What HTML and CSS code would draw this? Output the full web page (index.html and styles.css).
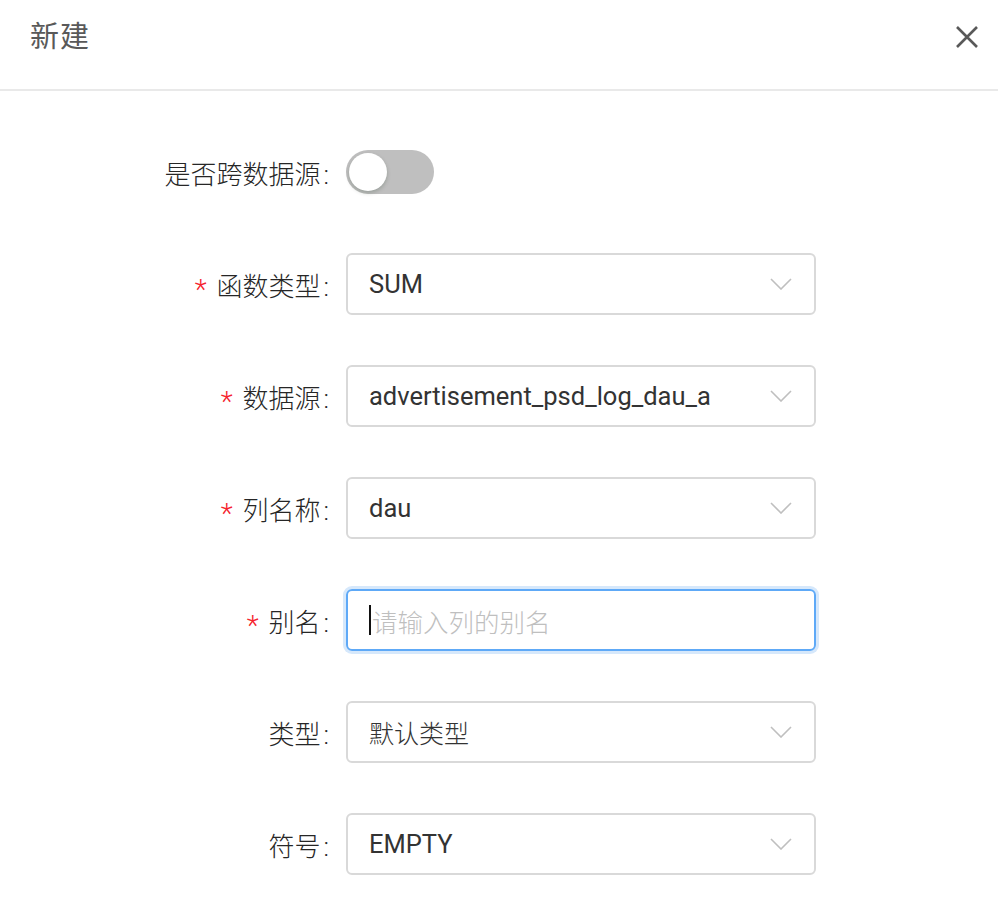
FILE: index.html
```html
<!DOCTYPE html>
<html lang="zh-CN">
<head>
<meta charset="utf-8">
<title>新建</title>
<link rel="stylesheet" href="styles.css">
</head>
<body>
<div class="modal">
  <div class="modal-header">
    <div class="modal-title">新建</div>
    <button class="modal-close" aria-label="关闭">
      <svg width="22" height="22" viewBox="0 0 22 22"><path d="M1 1 L21 21 M21 1 L1 21" stroke="#595959" stroke-width="2.6" stroke-linecap="butt" fill="none"/></svg>
    </button>
  </div>
  <div class="modal-body">
    <div class="form-row">
      <label class="form-label">是否跨数据源<span class="colon">:</span></label>
      <div class="form-control switch-wrap">
        <span class="switch"><span class="switch-knob"></span></span>
      </div>
    </div>
    <div class="form-row">
      <label class="form-label"><span class="req">*</span>函数类型<span class="colon">:</span></label>
      <div class="form-control">
        <div class="select"><span class="select-value">SUM</span><svg class="arrow" width="22" height="12" viewBox="0 0 22 12"><path d="M1 1 L11 11 L21 1" stroke="#bfbfbf" stroke-width="1.6" fill="none"/></svg></div>
      </div>
    </div>
    <div class="form-row">
      <label class="form-label"><span class="req">*</span>数据源<span class="colon">:</span></label>
      <div class="form-control">
        <div class="select"><span class="select-value">advertisement_psd_log_dau_a</span><svg class="arrow" width="22" height="12" viewBox="0 0 22 12"><path d="M1 1 L11 11 L21 1" stroke="#bfbfbf" stroke-width="1.6" fill="none"/></svg></div>
      </div>
    </div>
    <div class="form-row">
      <label class="form-label"><span class="req">*</span>列名称<span class="colon">:</span></label>
      <div class="form-control">
        <div class="select"><span class="select-value">dau</span><svg class="arrow" width="22" height="12" viewBox="0 0 22 12"><path d="M1 1 L11 11 L21 1" stroke="#bfbfbf" stroke-width="1.6" fill="none"/></svg></div>
      </div>
    </div>
    <div class="form-row">
      <label class="form-label"><span class="req">*</span>别名<span class="colon">:</span></label>
      <div class="form-control">
        <div class="input focused"><span class="caret"></span><span class="placeholder">请输入列的别名</span></div>
      </div>
    </div>
    <div class="form-row">
      <label class="form-label">类型<span class="colon">:</span></label>
      <div class="form-control">
        <div class="select"><span class="select-value cjk">默认类型</span><svg class="arrow" width="22" height="12" viewBox="0 0 22 12"><path d="M1 1 L11 11 L21 1" stroke="#bfbfbf" stroke-width="1.6" fill="none"/></svg></div>
      </div>
    </div>
    <div class="form-row">
      <label class="form-label">符号<span class="colon">:</span></label>
      <div class="form-control">
        <div class="select"><span class="select-value">EMPTY</span><svg class="arrow" width="22" height="12" viewBox="0 0 22 12"><path d="M1 1 L11 11 L21 1" stroke="#bfbfbf" stroke-width="1.6" fill="none"/></svg></div>
      </div>
    </div>
  </div>
</div>
</body>
</html>
```

FILE: styles.css
```css
* { box-sizing: border-box; }
html, body {
  margin: 0;
  padding: 0;
  background: #fff;
  font-family: "Roboto", "Noto Sans CJK SC", sans-serif;
  overflow: hidden;
}
.modal {
  width: 998px;
  height: 904px;
  background: #fff;
}
.modal-header {
  height: 91px;
  border-bottom: 2px solid #e9e9e9;
  display: flex;
  align-items: center;
  justify-content: space-between;
  padding: 0 20px 16px 30px;
}
.modal-title {
  font-size: 29px;
  color: #595959;
  line-height: 36px;
  letter-spacing: 1px;
  font-weight: 400;
}
.modal-close {
  border: 0;
  background: none;
  padding: 0;
  width: 22px;
  height: 22px;
  display: block;
}
.modal-close svg { display: block; }
.modal-body {
  padding-top: 50px;
}
.form-row {
  display: grid;
  grid-template-columns: 346px 470px;
  height: 62px;
  margin-bottom: 50px;
  align-items: center;
}
.form-label {
  text-align: right;
  font-size: 26px;
  font-weight: 300;
  color: #262626;
  padding-right: 17px;
  white-space: nowrap;
}
.req {
  color: #f5222d;
  font-family: "Roboto", sans-serif;
  font-weight: 300;
  font-size: 28px;
  margin-right: 10px;
  position: relative;
  top: 3px;
}
.colon {
  margin-left: 3px;
}
.form-control { height: 62px; }
.switch-wrap {
  display: flex;
  align-items: center;
}
.switch {
  width: 88px;
  height: 44px;
  border-radius: 22px;
  background: #bfbfbf;
  display: flex;
  align-items: center;
  padding-left: 3px;
}
.switch-knob {
  width: 38px;
  height: 38px;
  border-radius: 50%;
  background: #fff;
  box-shadow: 0 2px 4px rgba(0, 35, 11, 0.2);
}
.select, .input {
  height: 62px;
  border: 2px solid #d9d9d9;
  border-radius: 6px;
  display: flex;
  align-items: center;
  padding: 0 22px 0 21px;
  font-size: 25.5px;
  color: #333;
}
.select-value { flex: 1; }
.select-value.cjk { font-weight: 300; font-size: 25px; }
.arrow { display: block; }
.input.focused {
  border-color: #5ea9f7;
  box-shadow: 0 0 0 3px #d6e8fb;
}
.caret {
  width: 2px;
  height: 30px;
  background: #111;
  margin-right: 1px;
}
.placeholder { color: #bfbfbf; font-weight: 300; font-size: 25.5px; }
```
